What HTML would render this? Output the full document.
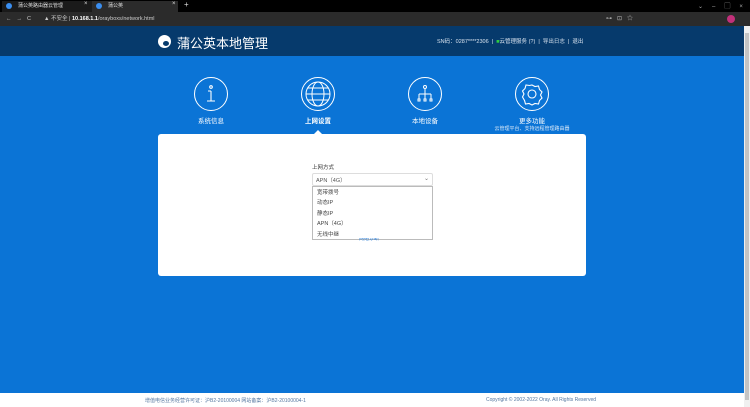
<!DOCTYPE html>
<html><head><meta charset="utf-8"><style>
*{margin:0;padding:0;box-sizing:border-box}
body{width:750px;height:407px;overflow:hidden;font-family:"Liberation Sans","Noto Sans CJK SC",sans-serif;background:#fff;position:relative}
.abs{position:absolute;white-space:nowrap}
.tabs{left:0;top:0;width:750px;height:12px;background:#000}
.tab{top:1px;height:11px;font-size:5px;color:#ddd;line-height:11px;padding-left:16px}
.addr{left:0;top:12px;width:750px;height:14px;background:#2b2b2b;color:#ccc;font-size:5.5px;line-height:14px}
.hdr{left:0;top:26px;width:744px;height:30px;background:#063a6c}
.main{left:0;top:56px;width:744px;height:337px;background:#0b74d6}
.scroll{left:744px;top:26px;width:6px;height:381px;background:#f0f0f0}
.thumb{left:745px;top:33px;width:4px;height:367px;background:#c4c4c4}
.nav{color:#fff;font-size:6.5px;text-align:center;width:80px}
.circ{width:34px;height:34px;border:1.3px solid #fff;border-radius:50%}
.card{left:158px;top:134px;width:428px;height:142px;background:#fff;border-radius:3px}
.item{left:317px;font-size:5.5px;color:#444}
</style></head><body>
<div class="abs tabs"></div>
<div class="abs tab" style="left:2px;width:90px;background:#1a1a1a">蒲公英路由器云管理</div>
<div class="abs" style="left:6px;top:3px;width:6px;height:6px;border-radius:50%;background:#3a8ef0"></div>
<div class="abs" style="left:84px;top:1px;color:#ddd;font-size:6px">×</div>
<div class="abs tab" style="left:92px;width:86px;background:#2b2b2b">蒲公英</div>
<div class="abs" style="left:96px;top:3px;width:6px;height:6px;border-radius:50%;background:#3a8ef0"></div>
<div class="abs" style="left:172px;top:1px;color:#ddd;font-size:6px">×</div>
<div class="abs" style="left:184px;top:0;color:#ddd;font-size:8px">+</div>
<div class="abs" style="left:698px;top:1px;color:#aaa;font-size:6px;letter-spacing:9px">⌄–▢×</div>
<div class="abs addr"><span style="margin-left:6px;letter-spacing:5px">←→C</span><span style="margin-left:8px">▲ 不安全 | <b style="color:#fff">10.168.1.1</b>/orayboxs/network.html</span></div>
<div class="abs" style="left:727px;top:15px;width:8px;height:8px;border-radius:50%;background:#c2307a"></div>
<div class="abs" style="left:606px;top:13px;color:#bbb;font-size:6px;letter-spacing:5px">⊶⊡☆</div>
<div class="abs hdr"></div>
<div class="abs" style="left:158px;top:35px;width:13px;height:13px;border-radius:50%;background:#fff"></div>
<div class="abs" style="left:163px;top:41px;width:6px;height:5px;border-radius:50%;background:#063a6c"></div>
<div class="abs" style="left:177px;top:33px;color:#fff;font-size:13px;font-family:'Noto Sans CJK SC',sans-serif">蒲公英本地管理</div>
<div class="abs" style="left:437px;top:37px;color:#d8e2ee;font-size:5.5px">SN码：0287****2306 &nbsp;| &nbsp;<span style="color:#2ecc40">■</span>云管理服务 (?) &nbsp;| &nbsp;导出日志 &nbsp;| &nbsp;退出</div>
<div class="abs main"></div>
<div class="abs scroll"></div><div class="abs thumb"></div>
<div class="abs circ" style="left:194px;top:77px"></div>
<svg class="abs" style="left:194px;top:77px" width="34" height="34"><g stroke="#fff" fill="none" stroke-width="1.1"><circle cx="17" cy="10" r="1.3"/><path d="M17 14v10M14 14h3M13 24h8"/></g></svg>
<div class="abs circ" style="left:301px;top:77px"></div>
<svg class="abs" style="left:301px;top:77px" width="34" height="34"><g stroke="#fff" fill="none" stroke-width="1"><circle cx="17" cy="17" r="12"/><ellipse cx="17" cy="17" rx="6" ry="12"/><path d="M5 17h24M7 11h20M7 23h20"/></g></svg>
<div class="abs circ" style="left:408px;top:77px"></div>
<svg class="abs" style="left:408px;top:77px" width="34" height="34"><g stroke="#fff" fill="none" stroke-width="1"><circle cx="17" cy="10" r="1.5"/><path d="M17 12v5M11 17h12M11 17v5M17 17v5M23 17v5"/><rect x="10" y="22" width="2" height="2"/><rect x="16" y="22" width="2" height="2"/><rect x="22" y="22" width="2" height="2"/></g></svg>
<div class="abs circ" style="left:515px;top:77px"></div>
<svg class="abs" style="left:515px;top:77px" width="34" height="34"><g stroke="#fff" fill="none" stroke-width="1.1"><path d="M17 8l3 1.5 3.5-.5 1 3.5 2.5 2.5-1.5 3 1.5 3-2.5 2.5-1 3.5-3.5-.5-3 1.5-3-1.5-3.5.5-1-3.5L7.5 20 9 17l-1.5-3L10 11.5l1-3.5 3.5.5z"/><circle cx="17" cy="17" r="4"/></g></svg>
<div class="abs nav" style="left:171px;top:115px">系统信息</div>
<div class="abs nav" style="left:278px;top:115px;font-weight:bold">上网设置</div>
<div class="abs nav" style="left:385px;top:115px">本地设备</div>
<div class="abs nav" style="left:492px;top:115px">更多功能</div>
<div class="abs" style="left:482px;top:125px;width:100px;text-align:center;color:#d6e6f7;font-size:5px">云管理平台、支持远程管理路由器</div>
<div class="abs card"></div>
<div class="abs" style="left:314px;top:130px;width:0;height:0;border-left:4px solid transparent;border-right:4px solid transparent;border-bottom:4px solid #fff"></div>
<div class="abs" style="left:312px;top:163px;font-size:5.5px;color:#333">上网方式</div>
<div class="abs" style="left:312px;top:173px;width:121px;height:13px;border:1px solid #ddd;border-radius:2px"></div>
<div class="abs" style="left:316px;top:176px;font-size:5.5px;color:#555">APN（4G）</div>
<div class="abs" style="left:424px;top:175px;font-size:6px;color:#777">⌄</div>
<div class="abs" style="left:312px;top:186px;width:121px;height:54px;border:1px solid #bbb;background:#fff"></div>
<div class="abs item" style="top:188px">宽带拨号</div>
<div class="abs item" style="top:198px">动态IP</div>
<div class="abs item" style="top:209px">静态IP</div>
<div class="abs item" style="top:219px">APN（4G）</div>
<div class="abs item" style="top:230px">无线中继</div>
<div class="abs" style="left:359px;top:238px;font-size:5px;color:#2b7fd8;height:4px;overflow:hidden;line-height:2px">网络诊断</div>
<div class="abs" style="left:145px;top:397px;font-size:5px;color:#5577a0">增值电信业务经营许可证：沪B2-20100004 网站备案：沪B2-20100004-1</div>
<div class="abs" style="left:486px;top:397px;font-size:5px;color:#5577a0">Copyright © 2002-2022 Oray. All Rights Reserved</div>
</body></html>
